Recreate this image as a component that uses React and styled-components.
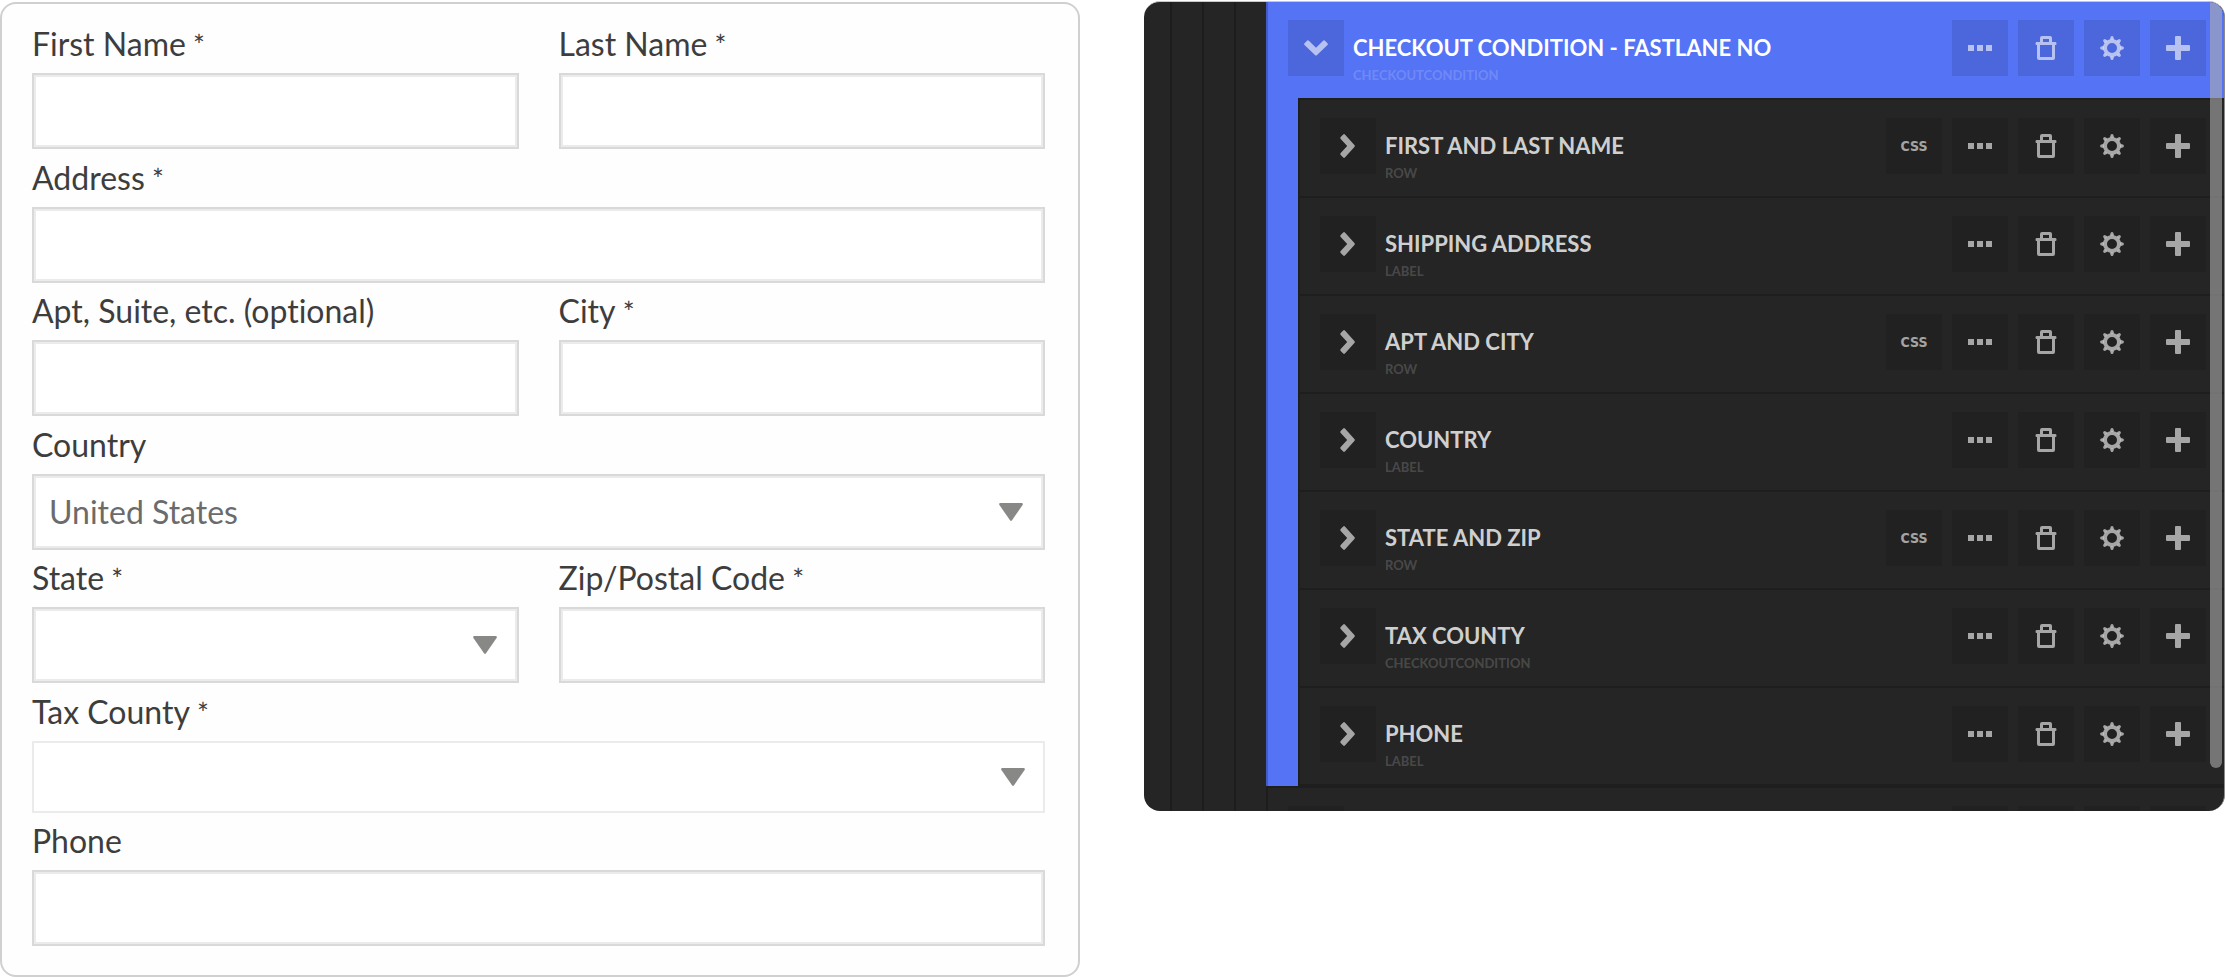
import React from "react";
import styled, { createGlobalStyle, css } from "styled-components";

const GlobalStyle = createGlobalStyle`
  *, *::before, *::after { box-sizing: border-box; }
  body {
    margin: 0;
    background: #ffffff;
    font-family: Lato, "Liberation Sans", sans-serif;
    font-variant-ligatures: none;
  }
`;

const Page = styled.main`
  display: grid;
  grid-template-columns: 1080fr 1081fr;
  column-gap: 64px;
  align-items: start;
  min-height: 100vh;
`;

/* ---------- Address form ---------- */

const FormCard = styled.form`
  display: flex;
  flex-direction: column;
  justify-content: space-between;
  min-height: calc(100vh - 2px);
  margin-top: 2px;
  padding: 21px 33px 29px 30px;
  border: 2px solid #d0d0d0;
  border-radius: 16px;
  background: #fefefe;
`;

const FormRow = styled.div`
  display: grid;
  grid-auto-flow: column;
  grid-auto-columns: 1fr;
  column-gap: 40px;
`;

const Field = styled.div`
  display: flex;
  flex-direction: column;
  gap: 10px;
  min-width: 0;
`;

const FieldLabel = styled.label`
  font-size: 32px;
  line-height: 38px;
  color: #3d3d3d;
`;

const Required = styled.span`
  font-size: 28px;
  line-height: 28px;
`;

const controlStyle = css`
  display: block;
  width: 100%;
  height: ${(p) => (p.$light ? "72px" : "76px")};
  margin: 0;
  padding: 0 15px;
  border: 2px solid ${(p) => (p.$light ? "#ebebeb" : "#d9d9d9")};
  border-radius: 0;
  box-shadow: ${(p) => (p.$light ? "none" : "inset 0 0 0 2px #ebebeb")};
  background: #ffffff;
  color: #6b6b6b;
  font-family: inherit;
  font-size: 32px;
`;

const TextInput = styled.input`
  ${controlStyle}
`;

const SelectInput = styled.select`
  ${controlStyle}
  appearance: none;
`;

const SelectWrap = styled.div`
  position: relative;
`;

const SelectArrow = styled.svg`
  position: absolute;
  top: 0;
  bottom: 0;
  right: ${(p) => (p.$light ? "20px" : "22px")};
  margin: auto 0;
  pointer-events: none;
`;

function LabelText({ id, label, required }) {
  return (
    <FieldLabel htmlFor={id}>
      {label}
      {required && <Required> *</Required>}
    </FieldLabel>
  );
}

function TextField({ id, label, required, type = "text" }) {
  return (
    <Field>
      <LabelText id={id} label={label} required={required} />
      <TextInput id={id} name={id} type={type} required={required} />
    </Field>
  );
}

function SelectField({ id, label, required, light, options }) {
  return (
    <Field>
      <LabelText id={id} label={label} required={required} />
      <SelectWrap>
        <SelectInput id={id} name={id} $light={light}>
          {options.map((o) => (
            <option key={o} value={o}>{o}</option>
          ))}
        </SelectInput>
        <SelectArrow $light={light} width="24" height="18" viewBox="0 0 24 18" aria-hidden="true">
          <path d="M1 0H23Q24.4 .6 23.6 2L13 17.2Q12 18.6 11 17.2L.4 2Q-.4 .6 1 0Z" fill="#888886" />
        </SelectArrow>
      </SelectWrap>
    </Field>
  );
}

/* ---------- Structure panel ---------- */

const Panel = styled.section`
  position: relative;
  height: calc(100vh - 167px);
  margin-top: 1px;
  padding-left: 26px;
  border-top: 1px solid #c8c8c8;
  border-right: 1px solid #8a8a8a;
  border-radius: 16px;
  background: #252525;
  overflow: hidden;
`;

const Ancestors = styled.div`
  display: grid;
  height: 100%;
`;

const Ancestor = styled.div`
  min-height: 100%;
  padding-left: 30px;
  border-left: 2px solid rgba(0, 0, 0, 0.2);
`;

const Group = styled.div`
  border-left: 2px solid rgba(0, 0, 0, 0.2);
  background: ${(p) => (p.$active ? "#5573f5" : "transparent")};
`;

const Children = styled.div`
  margin-left: 30px;
  border-left: 2px solid #1e1e1e;
  border-bottom: 2px solid #1e1e1e;
  background: #252525;
`;

const Item = styled.div`
  display: flex;
  align-items: flex-start;
  gap: 9px;
  height: ${(p) => (p.$header ? "96px" : "98px")};
  padding: 18px 18px 0 20px;
  border-top: ${(p) => (p.$header ? "none" : "2px solid #1e1e1e")};
`;

const ItemText = styled.div`
  flex: 1;
  min-width: 0;
  padding-top: 14px;
  text-transform: uppercase;
  white-space: nowrap;
`;

const ItemTitle = styled.div`
  font-size: 22px;
  line-height: 28px;
  font-weight: 700;
  color: ${(p) => (p.$header ? "#ffffff" : "rgba(255, 255, 255, 0.8)")};
`;

const ItemType = styled.div`
  margin-top: 4px;
  font-size: 13px;
  font-weight: 700;
  line-height: 18px;
  color: rgba(255, 255, 255, 0.18);
`;

const Actions = styled.div`
  display: flex;
  gap: 10px;
`;

const IconButton = styled.button`
  display: flex;
  align-items: center;
  justify-content: center;
  flex: none;
  width: 56px;
  height: 56px;
  margin: 0;
  padding: 0;
  border: 0;
  background: rgba(0, 0, 0, 0.1);
  color: rgba(255, 255, 255, 0.6);
`;

const CssMark = styled.span`
  font-family: "Liberation Sans Narrow", "DejaVu Sans Condensed", sans-serif;
  font-size: 14px;
  font-weight: 700;
`;

const ScrollThumb = styled.div`
  position: absolute;
  top: 0;
  right: 2px;
  bottom: 43px;
  width: 12px;
  border-radius: 0 0 6px 6px;
  background: rgba(173, 173, 173, 0.59);
`;

function Icon({ children }) {
  return (
    <svg width="24" height="24" viewBox="0 0 24 24" aria-hidden="true">
      {children}
    </svg>
  );
}

const Chevron = ({ open }) => (
  <Icon>
    <path
      d={
        open
          ? "M3 4.7L.5 7.2Q-.3 8 .5 8.9L11 18.9Q12 19.9 13 18.9L23.5 8.9Q24.3 8 23.5 7.2L21 4.7Q20 3.9 19.1 4.7L12 11.7L4.9 4.7Q4 3.9 3 4.7Z"
          : "M4.7 3L7.2 .5Q8 -.3 8.9 .5L18.4 11Q19.2 12 18.4 13L8.9 23.5Q8 24.3 7.2 23.5L4.7 21Q3.9 20 4.7 19.1L11.2 12L4.7 4.9Q3.9 4 4.7 3Z"
      }
      fill="currentColor"
    />
  </Icon>
);

const Dots = () => (
  <Icon>
    <path d="M0 9h6v6H0zM9 9h6v6H9zM18 9h6v6h-6z" fill="currentColor" />
  </Icon>
);

const Trash = () => (
  <Icon>
    <path
      fill="currentColor"
      fillRule="evenodd"
      d="M6 6V2Q6 0 8 0H16Q18 0 18 2V6H21.5Q22.5 6 22.5 7.5T21.5 9H21V22Q21 24 19 24H5Q3 24 3 22V9H2.5Q1.5 9 1.5 7.5T2.5 6ZM9 3V6H15V3ZM6 9V21H18V9Z"
    />
  </Icon>
);

const Gear = () => (
  <Icon>
    <circle cx="12" cy="12" r="7" fill="none" stroke="currentColor" strokeWidth="4" />
    {[0, 45, 90, 135, 180, 225, 270, 315].map((a) => (
      <path key={a} d="M9.8 3.6L10.8 .6Q12 -.4 13.2 .6L14.2 3.6Z" transform={`rotate(${a} 12 12)`} fill="currentColor" />
    ))}
  </Icon>
);

const Plus = () => (
  <Icon>
    <path
      d="M10 0H14Q15 0 15 1V9H23Q24 9 24 10V14Q24 15 23 15H15V23Q15 24 14 24H10Q9 24 9 23V15H1Q0 15 0 14V10Q0 9 1 9H9V1Q9 0 10 0Z"
      fill="currentColor"
    />
  </Icon>
);

function StructureItem({ title, type, header, hasCss }) {
  return (
    <Item $header={header}>
      <IconButton type="button" aria-label={header ? "Collapse" : "Expand"}>
        <Chevron open={header} />
      </IconButton>
      <ItemText>
        <ItemTitle $header={header}>{title}</ItemTitle>
        <ItemType>{type}</ItemType>
      </ItemText>
      <Actions>
        {hasCss && (
          <IconButton type="button">
            <CssMark>CSS</CssMark>
          </IconButton>
        )}
        <IconButton type="button" aria-label="More"><Dots /></IconButton>
        <IconButton type="button" aria-label="Delete"><Trash /></IconButton>
        <IconButton type="button" aria-label="Settings"><Gear /></IconButton>
        <IconButton type="button" aria-label="Add"><Plus /></IconButton>
      </Actions>
    </Item>
  );
}

const ITEMS = [
  { title: "First and Last Name", type: "Row", hasCss: true },
  { title: "Shipping Address", type: "Label" },
  { title: "Apt and City", type: "Row", hasCss: true },
  { title: "Country", type: "Label" },
  { title: "State and Zip", type: "Row", hasCss: true },
  { title: "Tax County", type: "CheckoutCondition" },
  { title: "Phone", type: "Label" },
];

export default function App() {
  return (
    <>
      <GlobalStyle />
      <Page>
        <FormCard>
          <FormRow>
            <TextField id="first-name" label="First Name" required />
            <TextField id="last-name" label="Last Name" required />
          </FormRow>
          <FormRow>
            <TextField id="address" label="Address" required />
          </FormRow>
          <FormRow>
            <TextField id="apt" label="Apt, Suite, etc. (optional)" />
            <TextField id="city" label="City" required />
          </FormRow>
          <FormRow>
            <SelectField id="country" label="Country" options={["United States"]} />
          </FormRow>
          <FormRow>
            <SelectField id="state" label="State" required options={[""]} />
            <TextField id="zip" label="Zip/Postal Code" required />
          </FormRow>
          <FormRow>
            <SelectField id="tax-county" label="Tax County" required light options={[""]} />
          </FormRow>
          <FormRow>
            <TextField id="phone" label="Phone" type="tel" />
          </FormRow>
        </FormCard>

        <Panel>
          <Ancestors>
            <Ancestor>
              <Ancestor>
                <Ancestor>
                  <Group $active>
                    <StructureItem header title="Checkout Condition - Fastlane No" type="CheckoutCondition" />
                    <Children>
                      {ITEMS.map((item) => (
                        <StructureItem key={item.title} {...item} />
                      ))}
                    </Children>
                  </Group>
                  <Group>
                    <StructureItem title="" type="" />
                  </Group>
                </Ancestor>
              </Ancestor>
            </Ancestor>
          </Ancestors>
          <ScrollThumb />
        </Panel>
      </Page>
    </>
  );
}
